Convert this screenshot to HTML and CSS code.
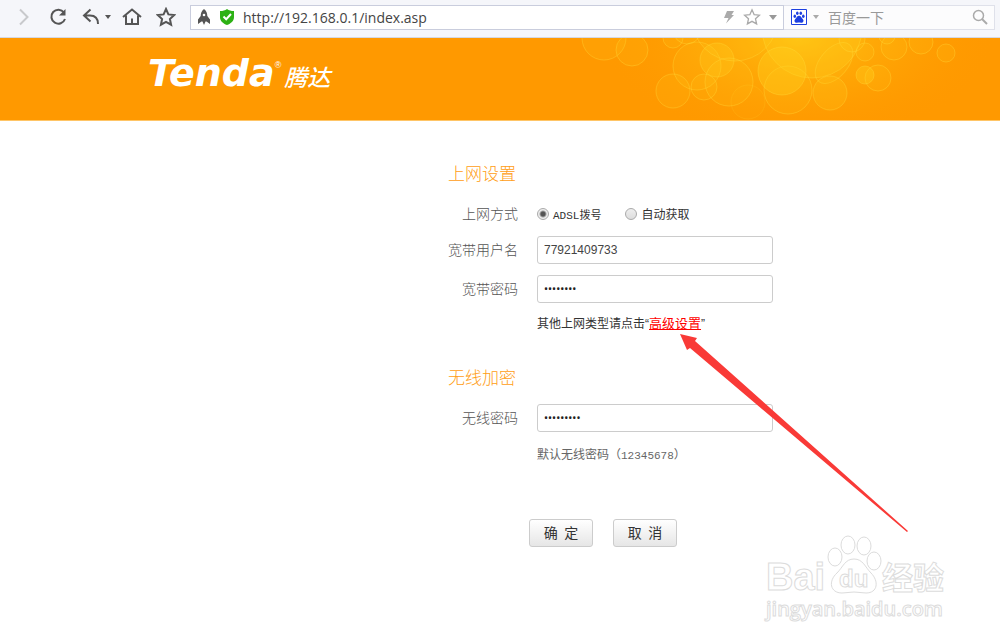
FILE: index.html
```html
<!DOCTYPE html>
<html lang="zh-CN">
    <head>
        <meta charset="UTF-8">
        <meta name="viewport" content="width=device-width, initial-scale=1.0">
        <title>Tenda 腾达</title>
        <link rel="stylesheet" href="styles.css">
    </head>
    <body>
        <header class="toolbar">
            <nav class="nav-buttons">
                <button type="button" aria-label="前进"><svg width="20" height="20" viewBox="0 0 20 20" fill="none" stroke="#c8c9cc" stroke-width="2"><path d="M6 2.5l7.5 7.5L6 17.500"/></svg></button>
                <button type="button" aria-label="刷新"><svg width="20" height="20" viewBox="0 0 20 20" fill="none" stroke="#555" stroke-width="2"><path d="M16 5.500A7 7 0 1 0 17 12"/><path d="M17.500 2v6.500H11z" fill="#555" stroke="none"/></svg></button>
                <button type="button" class="back" aria-label="后退"><svg width="30" height="20" viewBox="0 0 30 20" fill="none" stroke="#555" stroke-width="2"><path d="M8.500 2.500L2 8.500l6.500 6M2 8.500h6c5 0 8 3 8 8.500"/><path d="M23 8h6l-3 4z" fill="#555" stroke="none"/></svg></button>
                <button type="button" aria-label="主页"><svg width="20" height="20" viewBox="0 0 20 20" fill="none" stroke="#555" stroke-width="2"><path d="M1 10l9-7.500L19 10M4 8.500V17h12V8.500M10 17v-5.500"/></svg></button>
                <button type="button" aria-label="收藏"><svg width="20" height="20" viewBox="0 0 20 20" fill="none" stroke="#555" stroke-width="2"><path d="M10 2l2.400 5.400 5.800.600-4.300 4 1.200 5.700L10 14.800l-5.100 2.900 1.200-5.700-4.300-4 5.800-.600z"/></svg></button>
            </nav>
            <div class="address">
                <svg width="14" height="18" viewBox="0 0 14 18"><path d="M7 1C4.500 3 3.700 5.500 3.700 8L1 11.500V16l3.500-2.500h1L7 17l1.500-3.500h1L13 16v-4.500L10.300 8C10.300 5.500 9.500 3 7 1z" fill="#555"/><circle cx="7" cy="7" r="1.300" fill="#fff"/></svg>
                <svg class="shield" width="16" height="18" viewBox="0 0 16 18"><path d="M8 1c2 1.500 4 2 7 2v6c0 4-3 6.500-7 8-4-1.500-7-4-7-8V3c3 0 5-.500 7-2z" fill="#2db115"/><path d="M4.500 8.500l2.700 2.700L12 6" fill="none" stroke="#fff" stroke-width="2"/></svg>
                <input type="text" class="url" aria-label="地址" value="http://192.168.0.1/index.asp">
                <svg width="12" height="16" viewBox="0 0 12 16"><path d="M4 2h7L8.500 6H11L3 14.500 5.500 9H1z" fill="#aaa"/></svg>
                <svg width="18" height="18" viewBox="0 0 20 20" fill="none" stroke="#aaa" stroke-width="1.500"><path d="M10 2l2.400 5.400 5.800.600-4.300 4 1.200 5.700L10 14.800l-5.100 2.900 1.200-5.700-4.300-4 5.800-.600z"/></svg>
                <svg width="8" height="5" viewBox="0 0 8 5"><path d="M0 0h8L4 5z" fill="#999"/></svg>
            </div>
            <div class="search">
                <svg width="16" height="16" viewBox="0 0 16 16"><path d="M.5.500h15v15H.5z" fill="#fff" stroke="#1c3fe0"/><g fill="#1c3fe0"><ellipse cx="3.800" cy="7.300" rx="1.300" ry="1.700"/><ellipse cx="6.300" cy="4.200" rx="1.300" ry="1.800"/><ellipse cx="9.800" cy="4.200" rx="1.300" ry="1.800"/><ellipse cx="12.300" cy="7.300" rx="1.300" ry="1.700"/><path d="M8 6.800c2 0 2.500 2 3.700 3.200 1.800 2 .300 4-1.700 3.700-1.400-.300-2.600-.300-4 0-2 .300-3.500-1.700-1.700-3.700C5.500 8.800 6 6.800 8 6.800z"/></g></svg>
                <svg width="6" height="4" viewBox="0 0 6 4"><path d="M0 0h6L3 4z" fill="#aaa"/></svg>
                <input type="text" aria-label="搜索" placeholder="百度一下">
                <svg width="16" height="16" viewBox="0 0 16 16" fill="none" stroke="#aaa"><circle cx="6.500" cy="6.500" r="5" stroke-width="1.500"/><path d="M10 10l5 5" stroke-width="2"/></svg>
            </div>
        </header>

        <div class="banner">
            <svg class="bubbles" width="430" height="82" viewBox="0 0 430 82">
                <defs>
                    <radialGradient id="glow">
                        <stop offset="0" stop-color="#ffc010"/>
                        <stop offset="1" stop-color="#ff9900" stop-opacity="0"/>
                    </radialGradient>
                </defs>
                <ellipse cx="228" cy="0" rx="200" ry="105" fill="url(#glow)"/>
                <g fill="#ffd21e" fill-opacity=".12" stroke="#ffdc3c" stroke-opacity=".35">
                    <circle cx="34" cy="0" r="22"/>
                    <circle cx="62" cy="12" r="16"/>
                    <circle cx="103" cy="0" r="10"/>
                    <circle cx="117" cy="-8" r="14"/>
                    <circle cx="127" cy="28" r="24"/>
                    <circle cx="147" cy="22" r="17" fill-opacity=".25"/>
                    <circle cx="103" cy="53" r="17"/>
                    <circle cx="134" cy="49" r="13"/>
                    <circle cx="159" cy="44" r="24"/>
                    <circle cx="178" cy="64" r="17" fill-opacity=".06" stroke-opacity=".15"/>
                    <circle cx="165" cy="-20" r="43"/>
                    <circle cx="242" cy="-10" r="50" fill-opacity=".25"/>
                    <circle cx="218" cy="52" r="24"/>
                    <circle cx="212" cy="33" r="24" fill-opacity=".35"/>
                    <ellipse cx="264" cy="25" rx="14" ry="24" transform="rotate(40 264 25)"/>
                    <circle cx="260" cy="55" r="17" fill-opacity=".2"/>
                    <circle cx="282" cy="1" r="13"/>
                    <circle cx="295" cy="14" r="9"/>
                    <circle cx="308" cy="40" r="13"/>
                    <circle cx="295" cy="37" r="9" fill-opacity=".35"/>
                    <circle cx="324" cy="9" r="13"/>
                    <circle cx="317" cy="-2" r="8"/>
                    <circle cx="351" cy="4" r="12"/>
                    <circle cx="376" cy="15" r="9"/>
                </g>
            </svg>
            <div class="logo">
                <span class="logo-name">Tenda</span><sup>®</sup><span class="logo-cn">腾达</span>
            </div>
        </div>

        <main>
            <form class="settings">
                <h2>上网设置</h2>
                <div class="row">
                    <span class="label" id="mode">上网方式</span>
                    <div class="radios" role="radiogroup" aria-labelledby="mode">
                        <label><input type="radio" name="mode" checked><span>ADSL拨号</span></label>
                        <label><input type="radio" name="mode"><span>自动获取</span></label>
                    </div>
                </div>
                <div class="row">
                    <label class="label" for="user">宽带用户名</label>
                    <input class="field" type="text" id="user" value="77921409733">
                </div>
                <div class="row">
                    <label class="label" for="pass">宽带密码</label>
                    <input class="field" type="password" id="pass" value="12345678">
                </div>
                <p class="hint">其他上网类型请点击“<a href="#">高级设置</a>”</p>

                <h2>无线加密</h2>
                <div class="row">
                    <label class="label" for="wifi">无线密码</label>
                    <input class="field" type="password" id="wifi" value="123456789">
                </div>
                <p class="hint note">默认无线密码（<span>12345678</span>）</p>

                <div class="actions">
                    <button type="button">确&nbsp;&nbsp;定</button>
                    <button type="button">取&nbsp;&nbsp;消</button>
                </div>

                <svg class="arrow" width="230" height="200" viewBox="0 0 230 200"><path d="M1 1l17 4-2 3L229 198l-1 1L11 15l-3 2z" fill="#f93a37"/></svg>
            </form>
        </main>

        <svg class="watermark" width="190" height="90" viewBox="0 0 190 90" fill="#fff" stroke="#dcdcdc">
            <text class="wm-big" x="4" y="55">Bai</text>
            <ellipse cx="73" cy="22" rx="7" ry="9"/>
            <ellipse cx="86" cy="10" rx="7" ry="9"/>
            <ellipse cx="102" cy="11" rx="7" ry="9"/>
            <ellipse cx="112" cy="26" rx="7" ry="9"/>
            <path d="M92 24c9 0 11 8 17 14 8 8 7 20-5 20-4 0-8-1-12-1s-8 1-12 1c-12 0-14-12-5-20 6-6 8-14 17-14z"/>
            <text class="wm-du" x="77" y="52">du</text>
            <text class="wm-cn" x="120" y="54">经验</text>
            <text class="wm-site" x="4" y="81">jingyan.baidu.com</text>
        </svg>
    </body>
</html>
```
FILE: styles.css
```css
* {
    box-sizing: border-box;
}

body {
    margin: 0;
    min-height: 100vh;
    position: relative;
    background-color: #fff;
    color: #333;
    font-family: "Liberation Sans", "Noto Sans CJK SC", sans-serif;
    font-size: 12px;
}

svg {
    display: block;
    flex: none;
}

/* Browser bar */
.toolbar {
    display: flex;
    align-items: center;
    height: 38px;
    padding: 0 5px 3px 14px;
    background-color: #f5f6fa;
    border-bottom: 1px solid #d5d8e2;
}

.nav-buttons {
    display: flex;
    gap: 14px;
    width: 176px;
    flex: none;
}

.nav-buttons button {
    padding: 0;
    border: none;
    background: none;
}

.nav-buttons .back {
    margin-right: -4px;
}

.address, .search {
    display: flex;
    align-items: center;
    height: 25px;
    border: 1px solid #c9cddd;
    background-color: #fff;
}

.address {
    flex: 1;
    gap: 8px;
    padding: 0 6px;
}

.address input, .search input {
    flex: 1;
    min-width: 0;
    padding: 0;
    border: none;
    outline: none;
    background: none;
    color: #444;
    font-family: "Open Sans", "Noto Sans CJK SC", sans-serif;
}

.address input {
    font-size: 14px;
}

.search {
    width: 211px;
    gap: 6px;
    padding: 0 6px 0 7px;
    border-left: none;
    border-color: #dfe1ea;
    background-color: #fcfcfd;
}

.search input {
    margin-left: 3px;
    font-size: 14px;
}

.search input::placeholder {
    color: #999;
}

/* Orange header */
.banner {
    position: relative;
    height: 83px;
    padding: 15px 0 0 148px;
    overflow: hidden;
    background-color: #ff9900;
    border-bottom: 1px solid #ffc566;
}

.bubbles {
    position: absolute;
    top: 0;
    right: 0;
}

.logo {
    display: flex;
    align-items: flex-start;
    height: 40px;
    line-height: 40px;
    color: #fff;
    font-style: italic;
    font-weight: bold;
}

.logo-name {
    font-family: "DejaVu Sans", sans-serif;
    font-size: 38px;
}

.logo sup {
    font-size: 9px;
    font-weight: normal;
    font-style: normal;
    line-height: 24px;
}

.logo-cn {
    margin-left: 3px;
    font-family: "Noto Sans CJK SC", sans-serif;
    font-size: 23px;
    font-weight: 500;
    line-height: 46px;
}

/* Form */
.settings {
    position: relative;
    margin-left: 44.8%;
    padding-top: 41px;
}

h2 {
    height: 26px;
    margin: 0 0 12px;
    color: #ff9d14;
    font-size: 17px;
    font-weight: 300;
    line-height: 26px;
}

.row {
    display: flex;
    align-items: center;
    gap: 19px;
    height: 28px;
    margin-bottom: 11px;
}

.radios {
    display: flex;
    gap: 24px;
}

.row:has(.radios) {
    margin-bottom: 8px;
}

.label {
    width: 70px;
    padding-bottom: 2px;
    color: #555;
    font-size: 14px;
    font-weight: 300;
    text-align: right;
    white-space: nowrap;
}

.radios label {
    display: flex;
    align-items: center;
    gap: 4px;
    font-family: "Liberation Mono", "Noto Sans CJK SC", monospace;
    font-size: 11px;
}

.radios label + label {
    font-size: 12px;
}

.radios input {
    appearance: none;
    width: 12px;
    height: 12px;
    margin: 0;
    border: 1px solid #aaa;
    border-radius: 50%;
    background: linear-gradient(#eee, #ddd);
}

.radios input:checked {
    background: radial-gradient(circle, #555 2px, #eee 4px);
}

.field {
    width: 236px;
    height: 28px;
    padding: 0 6px;
    border: 1px solid #ccc;
    border-radius: 3px;
    background-color: #fff;
    color: #444;
    font-family: "Liberation Sans", sans-serif;
    font-size: 12px;
}

.field[type="password"] {
    font-family: Roboto, sans-serif;
    font-size: 12px;
    color: #222;
}

.hint {
    height: 20px;
    margin: 0 0 32px 89px;
    line-height: 20px;
    white-space: nowrap;
}

.hint a {
    color: #f00;
    font-size: 13px;
}

.note {
    margin-top: 13px;
    color: #666;
}

.note span {
    font-family: "Liberation Mono", monospace;
    font-size: 11px;
}

.actions {
    display: flex;
    gap: 20px;
    margin: 54px 0 0 81px;
}

.actions button {
    width: 64px;
    height: 28px;
    padding: 0 0 3px;
    border: 1px solid #ccc;
    border-radius: 3px;
    background: linear-gradient(#fff, #e6e6e6);
    color: #333;
    font-family: "Noto Sans CJK SC", sans-serif;
    font-size: 14px;
}

.arrow {
    position: absolute;
    top: 212px;
    left: 231px;
    pointer-events: none;
}

/* Corner mark */
.watermark {
    position: absolute;
    right: 48px;
    bottom: 18px;
    font-family: "Liberation Sans", "Noto Sans CJK SC", sans-serif;
    font-weight: bold;
}

.wm-big {
    font-size: 38px;
}

.wm-du {
    font-size: 24px;
}

.wm-cn {
    font-size: 31px;
}

.wm-site {
    font-family: "Open Sans", sans-serif;
    font-size: 20px;
    font-weight: 600;
}
```
